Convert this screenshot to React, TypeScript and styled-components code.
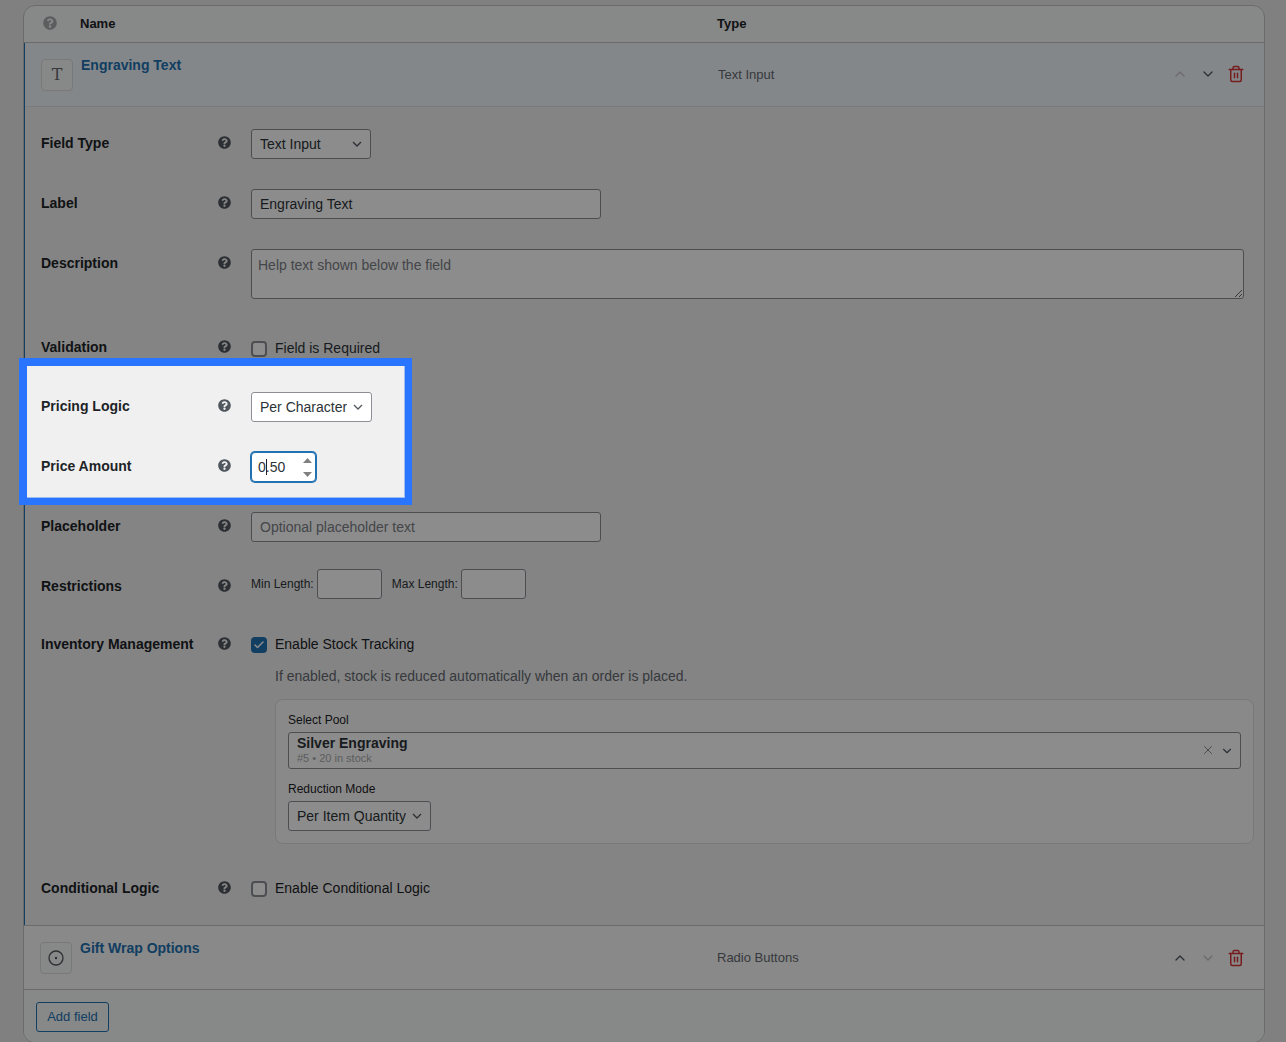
import React from 'react';
import styled, { createGlobalStyle } from 'styled-components';
import { ChevronDown, ChevronUp, Trash2, X, Check } from 'lucide-react';
import { FaQuestionCircle } from 'react-icons/fa';

const GlobalStyle = createGlobalStyle`
  html, body {
    margin: 0;
    height: 100%;
    overflow: hidden;
    background: #e9e9ea;
    font-family: "Liberation Sans", Arial, sans-serif;
    font-size: 14px;
    color: #1d2327;
  }
  * { box-sizing: border-box; }
`;

const HelpIcon: React.FC<{ muted?: boolean }> = ({ muted }) => (
  <HelpGlyph $muted={muted}>
    <FaQuestionCircle />
  </HelpGlyph>
);

const SelectChevron = () => (
  <svg width="10" height="6" viewBox="0 0 10 6" fill="none" stroke="currentColor" strokeWidth="1.3">
    <path d="M1 1l4 4 4-4" />
  </svg>
);

const SelectBox: React.FC<{ width: number; value: string }> = ({ width, value }) => (
  <SelectWrap style={{ width }}>
    <NativeSelect defaultValue={value}>
      <option>{value}</option>
    </NativeSelect>
    <ChevronSlot>
      <SelectChevron />
    </ChevronSlot>
  </SelectWrap>
);

const FieldHead: React.FC<{
  open?: boolean;
  icon: React.ReactNode;
  title: string;
  type: string;
  upDisabled?: boolean;
  downDisabled?: boolean;
}> = ({ open, icon, title, type, upDisabled, downDisabled }) => (
  <HeadRow $open={open}>
    <IconBox>{icon}</IconBox>
    <FieldTitle>{title}</FieldTitle>
    <FieldKind>{type}</FieldKind>
    <Actions $open={open}>
      <ActionButton $disabled={upDisabled}>
        <ChevronUp size={16} strokeWidth={2} />
      </ActionButton>
      <ActionButton $disabled={downDisabled}>
        <ChevronDown size={16} strokeWidth={2} />
      </ActionButton>
      <ActionButton $danger>
        <Trash2 size={18} strokeWidth={2} />
      </ActionButton>
    </Actions>
  </HeadRow>
);

const SettingRow: React.FC<{
  label: string;
  offset?: number;
  gap?: number;
  children: React.ReactNode;
}> = ({ label, offset = 6, gap = 30, children }) => (
  <Row $gap={gap}>
    <LabelCell $offset={offset}>
      <span>{label}</span>
      <HelpIcon />
    </LabelCell>
    <div>{children}</div>
  </Row>
);

export default function App() {
  return (
    <Page>
      <GlobalStyle />
      <Card>
        <TableHead>
          <HelpIcon muted />
          <HeadLabel>Name</HeadLabel>
          <HeadLabel>Type</HeadLabel>
        </TableHead>

        <OpenItem>
          <FieldHead
            open
            icon={<SerifT>T</SerifT>}
            title="Engraving Text"
            type="Text Input"
            upDisabled
          />
          <Settings>
            <SettingRow label="Field Type">
              <SelectBox width={120} value="Text Input" />
            </SettingRow>
            <SettingRow label="Label">
              <TextBox $width={350} defaultValue="Engraving Text" />
            </SettingRow>
            <SettingRow label="Description" gap={42}>
              <TextArea placeholder="Help text shown below the field" />
            </SettingRow>
            <SettingRow label="Validation" offset={-2} gap={35}>
              <CheckLine>
                <CheckBox />
                Field is Required
              </CheckLine>
            </SettingRow>
            <SettingRow label="Pricing Logic">
              <SelectBox width={121} value="Per Character" />
            </SettingRow>
            <SettingRow label="Price Amount">
              <NumberField>
                0<Caret />.50
                <Spinner>
                  <svg width="9" height="5" viewBox="0 0 9 5"><path d="M4.5 0L9 5H0z" fill="#808080" /></svg>
                  <svg width="9" height="5" viewBox="0 0 9 5"><path d="M0 0h9L4.5 5z" fill="#808080" /></svg>
                </Spinner>
              </NumberField>
            </SettingRow>
            <SettingRow label="Placeholder" gap={27}>
              <TextBox $width={350} placeholder="Optional placeholder text" />
            </SettingRow>
            <SettingRow label="Restrictions" offset={9} gap={38}>
              <LengthLine>
                <LengthLabel>Min Length:</LengthLabel>
                <TextBox $width={65} />
                <LengthLabel $spaced>Max Length:</LengthLabel>
                <TextBox $width={65} />
              </LengthLine>
            </SettingRow>
            <SettingRow label="Inventory Management" offset={-1} gap={37}>
              <CheckLine>
                <CheckBox $checked>
                  <Check size={12} strokeWidth={3} />
                </CheckBox>
                <CheckText>Enable Stock Tracking</CheckText>
              </CheckLine>
              <Hint>If enabled, stock is reduced automatically when an order is placed.</Hint>
              <PoolBox>
                <SmallLabel>Select Pool</SmallLabel>
                <PoolSelect>
                  <div>
                    <PoolName>Silver Engraving</PoolName>
                    <PoolMeta>#5 • 20 in stock</PoolMeta>
                  </div>
                  <PoolIcons>
                    <ClearIcon>
                      <X size={14} strokeWidth={1.5} />
                    </ClearIcon>
                    <ChevronDown size={14} strokeWidth={2} />
                  </PoolIcons>
                </PoolSelect>
                <SmallLabel $top={12}>Reduction Mode</SmallLabel>
                <SelectSpacer>
                  <SelectBox width={143} value="Per Item Quantity" />
                </SelectSpacer>
              </PoolBox>
            </SettingRow>
            <SettingRow label="Conditional Logic" offset={-1} gap={28}>
              <CheckLine>
                <CheckBox />
                <CheckText>Enable Conditional Logic</CheckText>
              </CheckLine>
            </SettingRow>
          </Settings>
        </OpenItem>

        <ClosedItem>
          <FieldHead
            icon={
              <svg width="16" height="16" viewBox="0 0 16 16" fill="none">
                <circle cx="8" cy="8" r="7" stroke="#50575e" strokeWidth="1.3" />
                <circle cx="8" cy="8" r="1.2" fill="#50575e" />
              </svg>
            }
            title="Gift Wrap Options"
            type="Radio Buttons"
            downDisabled
          />
        </ClosedItem>

        <Footer>
          <AddButton>Add field</AddButton>
        </Footer>
      </Card>
      <Spotlight />
    </Page>
  );
}

const Page = styled.div`
  position: relative;
  height: 1042px;
  overflow: hidden;
  padding: 5px 21px 0 23px;
`;

const Card = styled.div`
  height: 1038px;
  border: 1px solid #c3c4c7;
  border-radius: 12px;
  background: #f6f7f7;
  overflow: hidden;
`;

const TableHead = styled.div`
  display: grid;
  grid-template-columns: 37px 637px 1fr;
  align-items: center;
  height: 37px;
  padding: 0 0 2px 19px;
  border-bottom: 1px solid #c3c4c7;
`;

const HeadLabel = styled.div`
  font-size: 13px;
  font-weight: 700;
  color: #1d2327;
`;

const HelpGlyph = styled.span<{ $muted?: boolean }>`
  display: inline-flex;
  padding-bottom: ${(p) => (p.$muted ? 0 : 2)}px;
  font-size: ${(p) => (p.$muted ? 14 : 13)}px;
  color: ${(p) => (p.$muted ? '#a7aaad' : '#50575e')};
`;

const OpenItem = styled.div`
  border-left: 1px solid #2271b1;
  background: #f0f0f0;
`;

const ClosedItem = styled.div`
  border-top: 1px solid #c3c4c7;
  border-bottom: 1px solid #c3c4c7;
  background: #f9f9f9;
`;

const HeadRow = styled.div<{ $open?: boolean }>`
  display: grid;
  grid-template-columns: 40px 637px 1fr auto;
  align-items: center;
  height: ${(p) => (p.$open ? 64 : 63)}px;
  padding: 0 14px 0 16px;
  background: ${(p) => (p.$open ? '#f0f6fc' : 'transparent')};
  border-bottom: ${(p) => (p.$open ? '1px solid #e0e0e0' : 'none')};
`;

const IconBox = styled.div`
  display: flex;
  align-items: center;
  justify-content: center;
  width: 32px;
  height: 32px;
  border: 1px solid #dcdcde;
  border-radius: 4px;
  background: #f6f7f7;
`;

const SerifT = styled.span`
  font-family: "DejaVu Serif", "Liberation Serif", serif;
  font-size: 16px;
  font-weight: 400;
  color: #646970;
`;

const FieldTitle = styled.div`
  align-self: start;
  margin-top: 14px;
  font-size: 14px;
  line-height: 16px;
  font-weight: 700;
  color: #2271b1;
`;

const FieldKind = styled.div`
  font-size: 13px;
  color: #646970;
`;

const Actions = styled.div<{ $open?: boolean }>`
  display: flex;
  padding-bottom: ${(p) => (p.$open ? 1 : 0)}px;
`;

const ActionButton = styled.span<{ $disabled?: boolean; $danger?: boolean }>`
  display: flex;
  align-items: center;
  justify-content: center;
  width: 28px;
  color: ${(p) => (p.$danger ? '#d63638' : p.$disabled ? '#c3c4c7' : '#50575e')};
`;

const Settings = styled.div`
  display: flow-root;
  padding: 22px 10px 0 16px;
`;

const Row = styled.div<{ $gap: number }>`
  display: grid;
  grid-template-columns: 190px 1fr;
  column-gap: 20px;
  margin-bottom: ${(p) => p.$gap}px;
`;

const LabelCell = styled.div<{ $offset: number }>`
  display: flex;
  align-items: center;
  justify-content: space-between;
  height: 16px;
  margin-top: ${(p) => p.$offset}px;
  font-size: 14px;
  font-weight: 700;
  color: #1d2327;
  white-space: nowrap;
`;

const SelectWrap = styled.div`
  position: relative;
  height: 30px;
`;

const NativeSelect = styled.select`
  appearance: none;
  display: block;
  width: 100%;
  height: 30px;
  padding: 0 24px 0 8px;
  border: 1px solid #8c8f94;
  border-radius: 3px;
  background: #fff;
  font: 14px "Liberation Sans", Arial, sans-serif;
  color: #2c3338;
`;

const ChevronSlot = styled.span`
  position: absolute;
  right: 9px;
  top: 12px;
  display: flex;
  color: #50575e;
  pointer-events: none;
`;

const TextBox = styled.input<{ $width: number }>`
  display: block;
  width: ${(p) => p.$width}px;
  height: 30px;
  padding: 0 8px;
  border: 1px solid #8c8f94;
  border-radius: 3px;
  background: #fff;
  font: 14px "Liberation Sans", Arial, sans-serif;
  color: #2c3338;
  &::placeholder {
    color: #7c8086;
    opacity: 1;
  }
`;

const TextArea = styled.textarea`
  display: block;
  width: 993px;
  height: 50px;
  padding: 7px 6px 6px;
  border: 1px solid #8c8f94;
  border-radius: 3px;
  background: #fff;
  font: 14px "Liberation Sans", Arial, sans-serif;
  &::placeholder {
    color: #7c8086;
    opacity: 1;
  }
`;

const CheckLine = styled.div`
  display: flex;
  align-items: flex-start;
  gap: 8px;
  height: 16px;
  font-size: 14px;
  line-height: 14px;
  color: #2c3338;
`;

const CheckText = styled.span`
  color: #1d2327;
`;

const CheckBox = styled.span<{ $checked?: boolean }>`
  display: flex;
  align-items: center;
  justify-content: center;
  flex: none;
  width: 16px;
  height: 16px;
  border: ${(p) => (p.$checked ? 'none' : '2px solid #8c8f94')};
  border-radius: 4px;
  background: ${(p) => (p.$checked ? '#2271b1' : '#fff')};
  color: #fff;
`;

const NumberField = styled.div`
  position: relative;
  display: flex;
  align-items: center;
  width: 65px;
  height: 30px;
  padding-left: 6px;
  border: 1px solid #2271b1;
  border-radius: 4px;
  box-shadow: 0 0 0 1px #2271b1;
  background: #fff;
  font-size: 14px;
  color: #2c3338;
`;

const Caret = styled.span`
  display: inline-block;
  width: 1px;
  height: 16px;
  margin: 0 -1px 0 0;
  background: #1d2327;
`;

const Spinner = styled.span`
  position: absolute;
  right: 3px;
  top: 5px;
  display: flex;
  flex-direction: column;
  gap: 9px;
`;

const LengthLine = styled.div`
  display: flex;
  align-items: center;
`;

const LengthLabel = styled.span<{ $spaced?: boolean }>`
  margin: 0 3px 0 ${(p) => (p.$spaced ? 10 : 0)}px;
  font-size: 12px;
  color: #2c3338;
`;

const Hint = styled.div`
  margin: 15px 0 0 24px;
  font-size: 14px;
  line-height: 16px;
  color: #646970;
`;

const PoolBox = styled.div`
  margin: 15px 0 0 24px;
  padding: 12px 12px 12px;
  border: 1px solid #dcdcde;
  border-radius: 8px;
  background: #f9f9f9;
`;

const SmallLabel = styled.div<{ $top?: number }>`
  margin-top: ${(p) => p.$top ?? 0}px;
  font-size: 12px;
  line-height: 16px;
  color: #1d2327;
`;

const PoolSelect = styled.div`
  display: flex;
  align-items: flex-start;
  justify-content: space-between;
  height: 37px;
  margin-top: 4px;
  padding: 2px 6px 0 8px;
  border: 1px solid #8c8f94;
  border-radius: 3px;
  background: #fff;
`;

const PoolName = styled.div`
  font-size: 14px;
  line-height: 16px;
  font-weight: 700;
  color: #2c3338;
`;

const PoolMeta = styled.div`
  margin-top: 1px;
  font-size: 11px;
  line-height: 13px;
  color: #a7aaad;
`;

const PoolIcons = styled.div`
  display: flex;
  align-items: center;
  align-self: center;
  gap: 5px;
  margin-top: -2px;
  color: #50575e;
`;

const ClearIcon = styled.span`
  display: flex;
  margin-top: -1px;
  color: #787c82;
`;

const SelectSpacer = styled.div`
  margin-top: 4px;
`;

const Footer = styled.div`
  padding: 12px;
  background: #f6f7f7;
`;

const AddButton = styled.button`
  display: block;
  width: 73px;
  height: 30px;
  padding: 0 0 2px;
  border: 1px solid #2271b1;
  border-radius: 3px;
  background: #f6f7f7;
  font: 13px "Liberation Sans", Arial, sans-serif;
  color: #2271b1;
`;

const Spotlight = styled.div`
  position: absolute;
  left: 19px;
  top: 358px;
  width: 393px;
  height: 147px;
  border-style: solid;
  border-color: #2a75ff;
  border-width: 8px 7px 7px 8px;
  box-shadow: 0 0 0 2000px rgba(0, 0, 0, 0.45), inset -1px -1px 0 #9fbdf5;
  pointer-events: none;
`;
